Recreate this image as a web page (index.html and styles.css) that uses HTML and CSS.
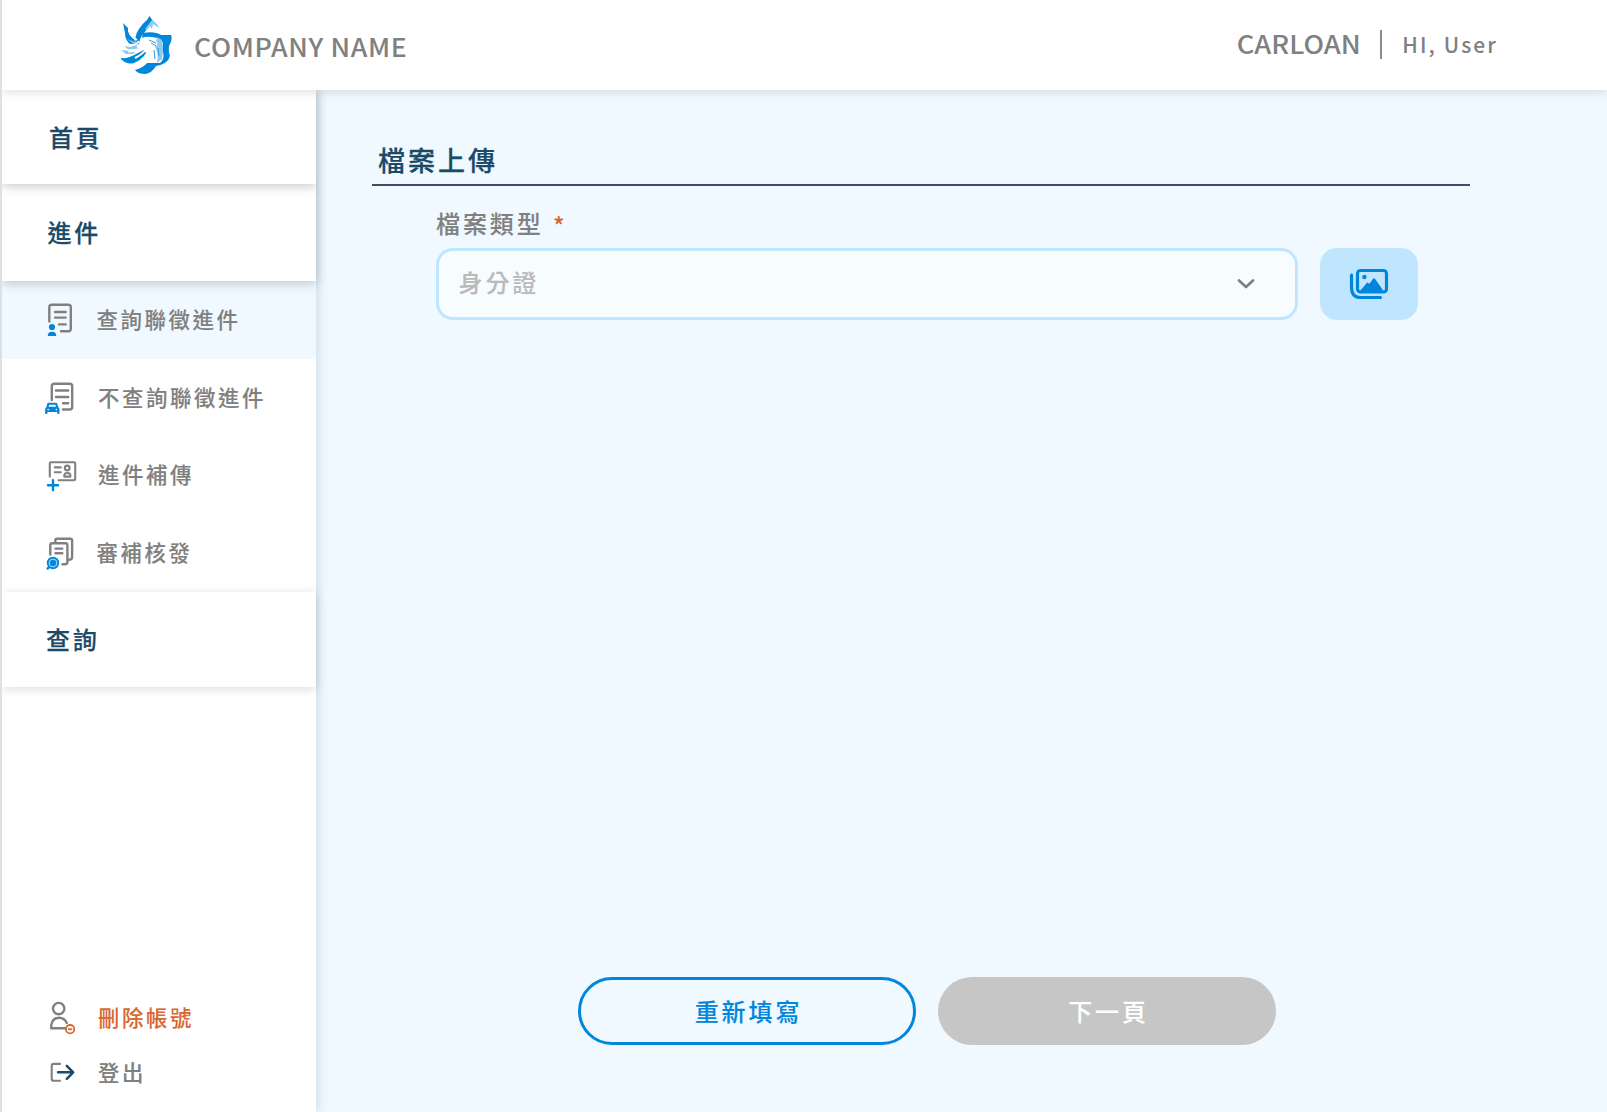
FILE: index.html
```html
<!DOCTYPE html>
<html lang="zh-Hant">
<head>
<meta charset="utf-8">
<title>檔案上傳</title>
<link rel="stylesheet" href="styles.css">
</head>
<body>
<header class="topbar">
  <div class="brand">
    <svg class="logo" viewBox="0 0 72 72">
      <g fill="#0087dc">
        <path d="M39.5 8L43 13L34 25Q30 29 29 36L26 37Q24 28 29 21Q33 15 37 12Z"/>
        <path d="M13 15L18 20Q17 26 24 31L26 36L22 38Q15 33 15 25Z"/>
        <path d="M33 25Q45 23 51 27L61 27Q63 31 59 38Q58 43 60 48Q58 56 46 58Q42 65 35 66Q28 66 25 62Q33 60 37 55L50 55Q55 51 53 44L53 35Q51 30 42 29Q35 28 32 30Z"/>
        <path d="M11 50Q18 51 26 46L34 42L36 45Q32 52 24 55Q17 57 11 51Z"/>
      </g>
      <g fill="#8bcbf0">
        <path d="M42 12Q48 16 49 20L43 16L42 21L40 18L37 22L35 21Z"/>
        <path d="M47 29L52 32Q54 40 52 51L47 55Q49 45 45 39Z"/>
        <path d="M17 31L25 37L20 39L14 38L20 43L11 42L16 46L23 46L28 41L25 34Z"/>
      </g>
      <g fill="none" stroke="#fff" stroke-width="2">
        <path d="M29 40Q34 32 43 33M25 50Q35 45 37 39Q40 35 47 37M31 52Q38 48 40 40M35 54Q41 51 43 42M16 35Q24 40 29 33M20 21Q18 27 27 32" />
        <path d="M40 32L47 36M18 43L29 42" stroke-width="3"/>
      </g>
      <path d="M39 32l7 3M41 35l5 3M44 42l1 9M48 40l1 8" fill="none" stroke="#2b9ce2" stroke-width="1"/>
    </svg>
    <span class="company">COMPANY NAME</span>
  </div>
  <div class="session">
    <span class="product">CARLOAN</span>
    <span class="divider"></span>
    <span class="user">HI, User</span>
  </div>
</header>
<div class="layout">
  <aside class="sidebar">
    <nav>
      <a class="section home">首頁</a>
      <a class="section cases">進件</a>
      <div class="submenu">
        <a class="item active">
          <svg class="icon" viewBox="0 0 40 40"><path class="ln" d="M9.3 21.5V7.3Q9.3 4.8 11.8 4.8H28.3Q30.8 4.8 30.8 7.3V28.7Q30.8 31.2 28.3 31.2H21M15 12H25.7M15 17.6H25.7M19 24.4H25.7"/><g class="blue"><circle cx="12" cy="27" r="3.1"/><path d="M7.9 36V34.6Q8.3 31.7 12 31.7T16.1 34.6V36Z"/></g></svg>
          <span>查詢聯徵進件</span></a>
        <a class="item wide">
          <svg class="icon" viewBox="0 0 40 40"><path class="ln" d="M11.8 22V8.3Q11.8 5.8 14.3 5.8H29.7Q32.2 5.8 32.2 8.3V29Q32.2 31.5 29.7 31.5H23M16 12.5H28.2M16 19H28.2M23 25.3H28.2"/><path class="blue" fill-rule="evenodd" d="M8.5 24.7H16Q17 24.7 17.3 25.7L18.3 29.2Q19.5 30 19.5 31.3V35.2Q19.5 36 18.6 36H18Q17.2 36 17.2 35.2V34H7.5V35.2Q7.5 36 6.7 36H6Q5.1 36 5.1 35.2V31.3Q5.1 30 6.3 29.2L7.2 25.7Q7.5 24.7 8.5 24.7ZM9.3 26.7L8.6 28.8H16L15.3 26.7ZM8.2 30.8A.8 .8 0 1 0 8.2 32.4A.8 .8 0 1 0 8.2 30.8ZM16.4 30.8A.8 .8 0 1 0 16.4 32.4A.8 .8 0 1 0 16.4 30.8Z"/></svg>
          <span>不查詢聯徵進件</span></a>
        <a class="item wide">
          <svg class="icon" viewBox="0 0 40 40"><path class="ln thin" d="M9.8 21.5V8.4Q9.8 7.2 11 7.2H34Q35.2 7.2 35.2 8.4V24.1Q35.2 25.3 34 25.3H18.5M14.8 12.4H20.8M14.8 17.2H20.8M24.3 21.6V20.4Q24.5 18 27.3 18T30.4 20.4V21.6Z"/><circle class="ln thin" cx="27.2" cy="13" r="2.4"/><path class="plus" d="M13 25.2V35.2M8 30.2H18"/></svg>
          <span>進件補傳</span></a>
        <a class="item">
          <svg class="icon" viewBox="0 0 40 40"><path class="ln" d="M10.3 21.5V12.2Q10.3 10.3 12.2 10.3H25.5Q27.4 10.3 27.4 12.2V29Q27.4 31.3 25 31.3H22.5M15.3 10V7.6Q15.3 5.8 17.1 5.8H30.3Q32.1 5.8 32.1 7.6V24.5Q32.1 26.7 28.5 26.9M15.5 15.6H22.3M15.5 20.3H22.3"/><path class="plus" d="M11 32L7.6 35.6"/><circle class="blue" cx="13" cy="30" r="6.2"/><circle cx="13" cy="30" r="3.9" fill="none" stroke="#fff" stroke-width=".7"/></svg>
          <span>審補核發</span></a>
      </div>
      <a class="section query">查詢</a>
    </nav>
    <div class="account">
      <a class="item danger wide">
        <svg class="icon" viewBox="0 0 40 40"><circle class="ln" cx="18.7" cy="10.6" r="5.7"/><path class="ln" d="M25.5 30.2H11.2V27.5Q12.2 19.7 19 19.7Q24.5 19.7 26.8 25"/><circle class="warn" cx="30.1" cy="31.2" r="4.2"/><path class="warn" d="M28 31.2H32.2"/></svg>
        <span>刪除帳號</span></a>
      <a class="item wide logout">
        <svg class="icon" viewBox="0 0 40 40"><path class="ln thin" d="M20 11.9H13.8Q11.7 11.9 11.7 14V26.7Q11.7 28.8 13.8 28.8H20"/><path class="arrow" d="M18 20.3H33M26.8 13.8L33.2 20.3L26.8 26.8"/></svg>
        <span>登出</span></a>
    </div>
  </aside>
  <main class="content">
    <h1 class="title">檔案上傳</h1>
    <div class="form">
      <label class="label">檔案類型 <span class="required">*</span></label>
      <div class="row">
        <div class="select"><span>身分證</span><svg class="chevron" viewBox="0 0 20 14"><path d="M3 3.5L10 10L17 3.5"/></svg></div>
        <button class="picker"><svg viewBox="0 0 42 34"><rect x="9.5" y="3.5" width="29" height="21.5" rx="3"/><path d="M3.5 8V19.5Q3.5 30.5 12 30.5H32.5"/><circle class="solid" cx="16.4" cy="10" r="2.2"/><path class="solid" d="M12 24L18.5 16.2Q19.5 15 20.5 16.2L21.3 17L24.8 12Q26 10.5 27.2 12L35.5 24Z"/></svg></button>
      </div>
    </div>
    <div class="actions">
      <button class="btn reset">重新填寫</button>
      <button class="btn next">下一頁</button>
    </div>
  </main>
</div>
</body>
</html>
```
FILE: styles.css
```css
* { box-sizing: border-box; }
body {
  margin: 0;
  height: 1112px;
  display: flex;
  flex-direction: column;
  overflow: hidden;
  border-left: 2px solid #e0e0e0;
  background: #f0f9ff;
  color: #808080;
  font-family: "Noto Sans CJK TC", "Noto Sans", sans-serif;
  font-weight: 500;
}
button { font: inherit; padding: 0; border: 0; }
.topbar {
  height: 90px;
  flex: none;
  display: flex;
  justify-content: space-between;
  background: #fff;
  box-shadow: 0 2px 10px rgba(0, 0, 0, .12);
  position: relative;
  z-index: 3;
}
.brand { display: flex; padding: 8px 0 0 108px; }
.logo { width: 72px; height: 72px; }
.company {
  margin: 19px 0 0 12px;
  font-size: 25px;
  line-height: 38px;
  letter-spacing: .6px;
  transform: scaleX(1.068);
  transform-origin: left;
}
.session { display: flex; padding-right: 109px; }
.product {
  margin-top: 24px;
  font-size: 25px;
  line-height: 38px;
  transform: scaleX(1.09);
  transform-origin: right;
}
.divider { width: 2px; height: 29px; margin: 30px 20px 0 20px; background: #8c8c8c; }
.user { margin-top: 27px; font-size: 21px; line-height: 34px; letter-spacing: 2.1px; }
.layout { flex: 1; display: flex; min-height: 0; -webkit-text-stroke: .12px currentColor; }
.sidebar {
  width: 314px;
  flex: none;
  display: flex;
  flex-direction: column;
  justify-content: space-between;
  background: #fff;
  box-shadow: 2px 0 10px rgba(26, 74, 104, .16);
}
.section {
  position: relative;
  display: flex;
  align-items: center;
  height: 95px;
  padding: 0 0 2px 45.5px;
  background: #fff;
  color: #1a4a68;
  font-size: 24px;
  letter-spacing: 2.8px;
  box-shadow: 0 2px 10px rgba(26, 40, 60, .26);
  -webkit-text-stroke-width: .25px;
}
.home { z-index: 2; height: 94px; padding-left: 47px; }
.cases { z-index: 1; height: 97px; }
.query { padding-left: 44px; box-shadow: 0 2px 10px rgba(0, 0, 0, .14); }
.submenu { height: 311px; }
.item {
  height: 77.7px;
  display: flex;
  align-items: center;
  gap: 16.5px;
  padding-left: 38px;
  font-size: 21.4px;
  letter-spacing: 2.6px;
}
.item span { margin-bottom: 3px; }
.wide { gap: 18px; }
.active { background: #f0f9ff; }
.icon { width: 40px; height: 40px; overflow: visible; }
.ln { fill: none; stroke: #808080; stroke-width: 2.4; stroke-linecap: round; stroke-linejoin: round; }
.thin { stroke-width: 2.1; }
.blue { fill: #0087dc; }
.plus { fill: none; stroke: #0087dc; stroke-width: 2.4; stroke-linecap: round; }
.warn { fill: none; stroke: #d9672f; stroke-width: 1.8; }
.arrow { fill: none; stroke: #1a4a68; stroke-width: 2.4; stroke-linecap: round; stroke-linejoin: round; }
.account { padding-bottom: 12px; }
.account .item { height: 55px; }
.logout .icon { margin-bottom: 2px; }
.danger { color: #d9672f; }
.content { flex: 1; display: flex; flex-direction: column; padding: 50px 137px 67px 56px; }
.title {
  margin: 0 0 20px;
  height: 46px;
  padding-left: 6px;
  border-bottom: 2px solid #3c5168;
  color: #1a4a68;
  font-size: 27px;
  font-weight: 500;
  line-height: 40px;
  letter-spacing: 3px;
  -webkit-text-stroke-width: .25px;
}
.form { padding-left: 64px; }
.label { display: block; height: 42px; line-height: 34px; font-size: 24px; letter-spacing: 2.9px; }
.required { position: relative; top: 2px; left: 1px; color: #d9672f; -webkit-text-stroke: 0; }
.row { display: flex; gap: 22px; }
.select {
  width: 862px;
  height: 72px;
  display: flex;
  align-items: center;
  justify-content: space-between;
  padding: 0 39px 6px 19.5px;
  border: 3px solid #c0e6ff;
  border-radius: 17px;
  background: #f7fcff;
  color: #bababa;
  font-size: 24px;
  letter-spacing: 2.9px;
}
.chevron { width: 20px; height: 14px; margin-top: 6px; fill: none; stroke: #808080; stroke-width: 2.7; stroke-linecap: round; stroke-linejoin: round; }
.picker { display: grid; place-items: center; width: 98px; height: 72px; border-radius: 17px; background: #c0e6ff; }
.picker svg { width: 42px; height: 34px; fill: none; stroke: #0087dc; stroke-width: 3.2; stroke-linecap: round; }
.picker .solid { fill: #0087dc; stroke: none; }
.actions { display: flex; gap: 22px; margin: auto 0 0 206px; }
.btn { width: 338px; height: 68px; padding: 0 0 2px 3px; border-radius: 35px; font-size: 24px; letter-spacing: 2.9px; }
.reset { border: 3px solid #0087dc; background: #f0f9ff; color: #0087dc; }
.next { background: #c6c6c6; color: #fff; }
```
